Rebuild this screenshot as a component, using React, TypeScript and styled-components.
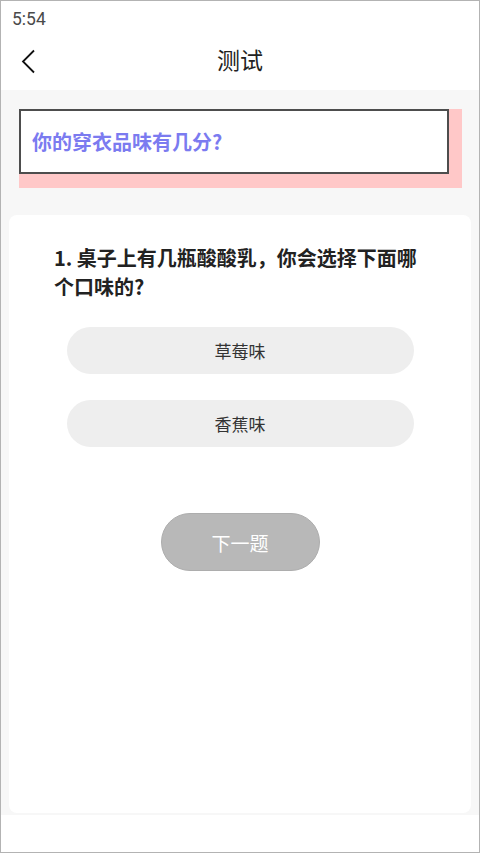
import React from "react";
import styled, { createGlobalStyle } from "styled-components";

const Global = createGlobalStyle`
  html, body { margin: 0; padding: 0; background: #fff; }
  * { box-sizing: border-box; }
  body { font-family: Roboto, "Noto Sans CJK SC", sans-serif; }
`;

const Frame = styled.div`
  width: 480px;
  height: 853px;
  border: 1px solid #b3b3b3;
  background: #fff;
  display: flex;
  flex-direction: column;
  overflow: hidden;
`;

const StatusBar = styled.div`
  height: 35px;
  display: flex;
  align-items: center;
  padding-left: 11px;
  font-family: Roboto, sans-serif;
  font-size: 17.5px;
  color: #4a4a4a;
`;

const Header = styled.div`
  height: 54px;
  position: relative;
  display: flex;
  align-items: center;
  justify-content: center;
  padding-bottom: 8px;
`;

const BackButton = styled.div`
  position: absolute;
  left: 20px;
  top: 12px;
  width: 18px;
  height: 26px;
  display: flex;
  align-items: center;
`;

const Title = styled.div`
  font-family: "Noto Sans CJK SC", sans-serif;
  font-size: 23px;
  line-height: 30px;
  color: #222;
`;

const Content = styled.div`
  height: 725px;
  background: #f7f7f7;
  padding: 19px 8px 0 8px;
  display: flex;
  flex-direction: column;
`;

const BannerShadow = styled.div`
  margin: 0 9px 0 10px;
  background: #ffc8c8;
  padding: 0 13px 14px 0;
`;

const Banner = styled.div`
  height: 65px;
  background: #fff;
  border: 2px solid #4d4d4d;
  display: flex;
  align-items: center;
  padding-left: 11px;
  font-family: "Noto Sans CJK SC", sans-serif;
  font-weight: 700;
  font-size: 20px;
  color: #7b7bf0;
`;

const Card = styled.div`
  margin-top: 27px;
  height: 598px;
  background: #fff;
  border-radius: 8px;
  padding-top: 28px;
  display: flex;
  flex-direction: column;
  align-items: center;
`;

const Question = styled.div`
  align-self: stretch;
  padding: 0 46px 0 45px;
  font-family: "Noto Sans CJK SC", sans-serif;
  font-weight: 700;
  font-size: 20px;
  line-height: 29px;
  color: #222;
`;

const Options = styled.div`
  margin-top: 26px;
  display: flex;
  flex-direction: column;
  gap: 26px;
  align-items: center;
`;

const Option = styled.div`
  width: 347px;
  height: 47px;
  border-radius: 24px;
  background: #eeeeee;
  display: flex;
  align-items: center;
  justify-content: center;
  font-family: "Noto Sans CJK SC", sans-serif;
  font-size: 17px;
  color: #333;
`;

const NextButton = styled.div`
  margin-top: 66px;
  width: 159px;
  height: 58px;
  border-radius: 29px;
  background: #b8b8b8;
  border: 1px solid #adadad;
  display: flex;
  align-items: center;
  justify-content: center;
  font-family: "Noto Sans CJK SC", sans-serif;
  font-size: 19px;
  color: #fff;
`;

export default function App() {
  return (
    <>
      <Global />
      <Frame>
        <StatusBar>5:54</StatusBar>
        <Header>
          <BackButton>
            <svg width="14" height="25" viewBox="0 0 14 25" fill="none">
              <path d="M13 1.5 L2 12.5 L13 23.5" stroke="#111" strokeWidth="1.8" />
            </svg>
          </BackButton>
          <Title>测试</Title>
        </Header>
        <Content>
          <BannerShadow>
            <Banner>你的穿衣品味有几分?</Banner>
          </BannerShadow>
          <Card>
            <Question>1. 桌子上有几瓶酸酸乳，你会选择下面哪个口味的?</Question>
            <Options>
              <Option>草莓味</Option>
              <Option>香蕉味</Option>
            </Options>
            <NextButton>下一题</NextButton>
          </Card>
        </Content>
      </Frame>
    </>
  );
}
